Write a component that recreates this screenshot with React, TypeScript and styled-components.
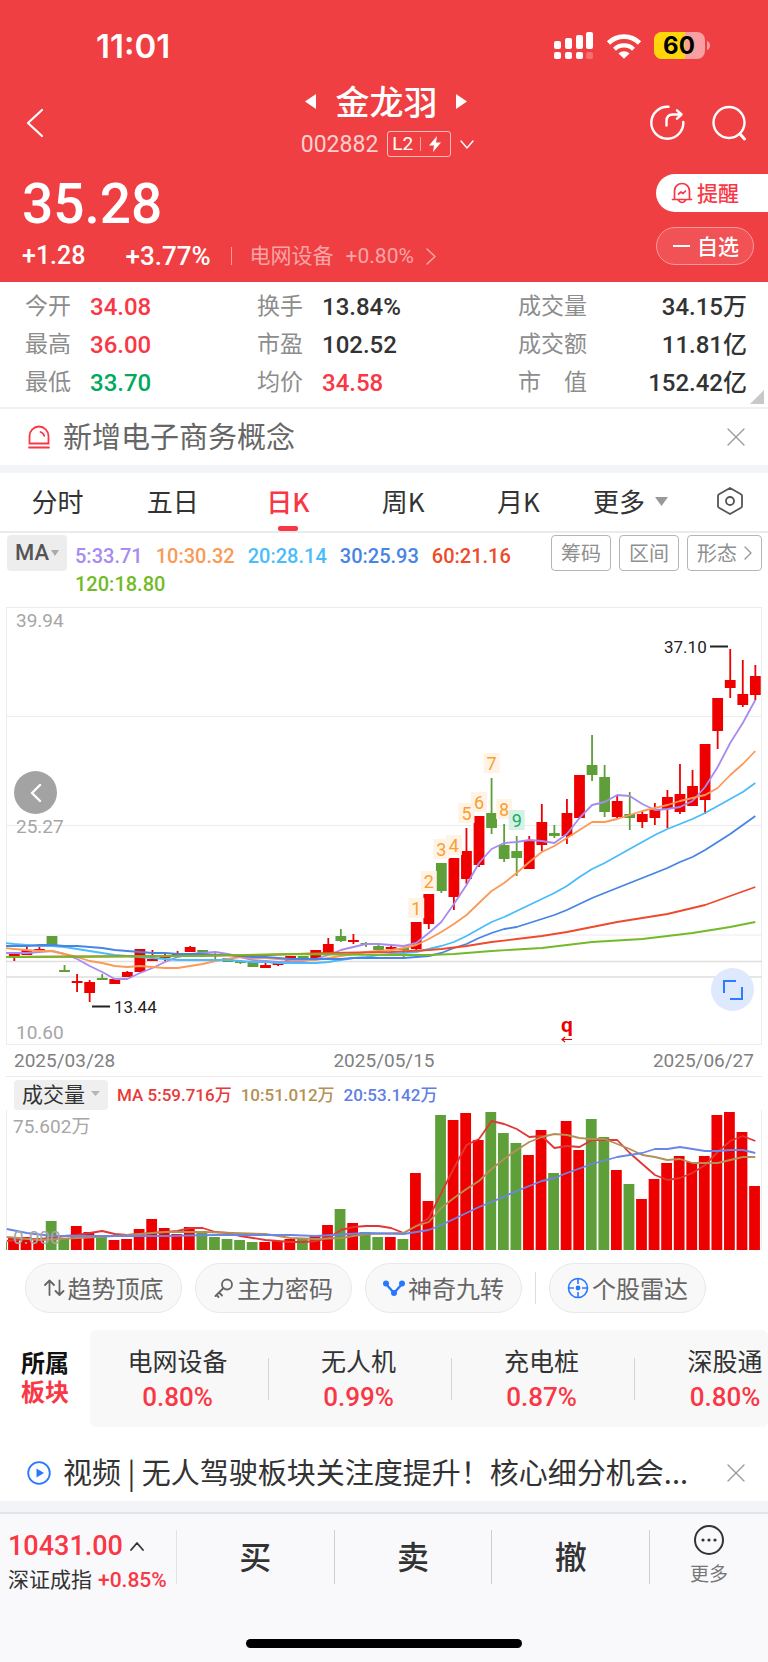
import React from 'react';
import styled, { createGlobalStyle } from 'styled-components';

const RED = '#f93745';
const UP = '#ef0000';
const DOWN = '#5f9f3a';
const CJK = '"Noto Sans CJK SC", sans-serif';
const NUM = `Roboto, ${CJK}`;

const Global = createGlobalStyle`
  * { box-sizing: border-box; }
  body { margin: 0; background: #fff; font-family: ${NUM}; color: #333; }
  button { font: inherit; color: inherit; background: none; border: 0; padding: 0; margin: 0; cursor: pointer; display: flex; align-items: center; }
  a { color: inherit; text-decoration: none; }
  svg { display: block; flex: none; }
  h1, p, dl, dd, dt { margin: 0; font-weight: 400; }
`;

/* ---------- header ---------- */
const Header = styled.header`
  background: #f03f42;
  color: #fff;
  padding: 30px 0 14px;
`;
const StatusBar = styled.div`
  display: flex;
  justify-content: space-between;
  align-items: center;
  height: 32px;
  padding: 0 57px 0 96px;
`;
const Clock = styled.span`
  font: 600 33px/32px Inter, sans-serif;
`;
const StatusIcons = styled.div`
  display: flex;
  align-items: center;
  gap: 12px;
`;
const Nav = styled.div`
  display: grid;
  grid-template-columns: 1fr auto 1fr;
  align-items: center;
  padding: 18px 21px 0 26px;
`;
const NavActions = styled.div`
  display: flex;
  justify-content: flex-end;
  gap: 27px;
`;
const TitleBlock = styled.div`
  display: flex;
  flex-direction: column;
  align-items: center;
`;
const TitleRow = styled.div`
  display: flex;
  align-items: center;
  gap: 18px;
`;
const Title = styled.h1`
  font: 500 34px/42px ${CJK};
`;
const CodeRow = styled.div`
  display: flex;
  align-items: center;
  gap: 9px;
  height: 44px;
  padding-left: 2px;
  font-size: 23px;
  color: #fccfd0;
`;
const LevelBadge = styled.span`
  display: flex;
  align-items: center;
  gap: 7px;
  height: 26px;
  padding: 0 8px 0 4px;
  border: 1px solid #fbbcbd;
  border-radius: 3px;
  color: #fff;
  font: 400 19px/24px ${NUM};
`;
const Rule = styled.span<{ $h: number; $color: string }>`
  width: 1px;
  height: ${p => p.$h}px;
  background: ${p => p.$color};
  flex: none;
`;
const Quote = styled.div`
  display: flex;
  justify-content: space-between;
  padding: 8px 0 0 22px;
`;
const QuoteMain = styled.div`
  display: flex;
  flex-direction: column;
`;
const Price = styled.div`
  font: 500 55px/60px ${NUM};
  margin-bottom: 10px;
`;
const ChangeRow = styled.div`
  display: flex;
  align-items: center;
  height: 24px;
  font: 500 25px/24px ${NUM};
`;
const Percent = styled.span`
  margin: 0 20px 0 40px;
  font-size: 26px;
`;
const SectorLink = styled.a`
  display: flex;
  align-items: center;
  gap: 12px;
  margin-left: 18px;
  color: #f9a5a7;
  font: 400 21px/24px ${NUM};
`;
const QuoteActions = styled.div`
  display: flex;
  flex-direction: column;
  width: 112px;
  gap: 15px;
`;
const RemindButton = styled.button`
  height: 38px;
  padding-left: 15px;
  gap: 4px;
  border-radius: 19px 0 0 19px;
  background: #fff;
  color: ${RED};
  font: 500 21px/38px ${CJK};
`;
const WatchButton = styled.button`
  width: 98px;
  height: 38px;
  gap: 7px;
  padding-left: 16px;
  border: 1px solid #f79a9c;
  border-radius: 19px;
  background: #f15255;
  font: 500 21px/36px ${CJK};
`;
const ButtonText = styled.span`
  line-height: 32px;
  margin-bottom: 2px;
`;

/* ---------- statistics ---------- */
const Stats = styled.section`
  position: relative;
  display: flex;
  padding: 6px 21px 5px 25px;
  border-bottom: 2px solid #f1f1f3;
`;
const StatColumn = styled.dl<{ $width: string; $push?: boolean }>`
  flex: ${p => p.$width};
  div { display: flex; align-items: center; height: 38px; justify-content: ${p => (p.$push ? 'space-between' : 'flex-start')}; }
`;
const StatName = styled.dt<{ $width: number }>`
  width: ${p => p.$width}px;
  margin-bottom: 6px;
  font: 400 23px/32px ${CJK};
  color: #8d8d8d;
  white-space: pre;
`;
const StatValue = styled.dd<{ $color: string }>`
  font: 500 24px/38px ${NUM};
  color: ${p => p.$color};
`;
const Corner = styled.svg`
  position: absolute;
  right: 4px;
  bottom: 3px;
`;

/* ---------- notices ---------- */
const Notice = styled.section<{ $color: string }>`
  display: flex;
  align-items: center;
  height: 56px;
  padding: 0 23px 0 27px;
  gap: 12px;
  color: ${p => p.$color};
`;
const NoticeText = styled.a`
  flex: 1;
  margin-bottom: 4px;
  white-space: nowrap;
  overflow: hidden;
  font: 400 29px/44px ${CJK};
`;
const VideoNotice = styled(Notice)`
  height: 74px;
  padding-top: 17px;
`;
const Band = styled.div<{ $h: number }>`
  height: ${p => p.$h}px;
  background: #f2f4f8;
`;

/* ---------- tabs ---------- */
const Tabs = styled.nav`
  display: grid;
  grid-template-columns: repeat(6, 15%) 1fr;
  height: 60px;
  border-bottom: 2px solid #ebebeb;
`;
const Tab = styled.button<{ $active?: boolean }>`
  position: relative;
  justify-content: center;
  gap: 10px;
  padding-bottom: 2px;
  font: ${p => (p.$active ? 500 : 400)} 26px/56px ${CJK};
  color: ${p => (p.$active ? RED : '#333')};
  &::after {
    content: '';
    display: ${p => (p.$active ? 'block' : 'none')};
    position: absolute;
    left: calc(50% - 10px);
    bottom: 0;
    width: 20px;
    height: 5px;
    border-radius: 2px;
    background: ${RED};
  }
`;
const MoreTab = styled(Tab)`
  padding-right: 6px;
`;

/* ---------- chart ---------- */
const Legend = styled.div`
  display: flex;
  align-items: flex-start;
  padding: 2px 6px 0 7px;
  height: 74px;
`;
const IndicatorButton = styled.button`
  height: 36px;
  width: 60px;
  justify-content: center;
  gap: 2px;
  background: #ededed;
  border-radius: 4px;
  color: #555;
  font: 500 22px/36px ${NUM};
`;
const LegendValues = styled.div`
  flex: 1;
  display: flex;
  flex-wrap: wrap;
  column-gap: 13px;
  padding: 7px 0 0 8px;
  font: 500 20px/28px ${NUM};
`;
const Tone = styled.span<{ $color: string }>`
  color: ${p => p.$color};
`;
const LegendActions = styled.div`
  display: flex;
  gap: 8px;
`;
const OutlineButton = styled.button`
  height: 36px;
  padding: 0 9px;
  gap: 7px;
  border: 1px solid #b5b5b5;
  border-radius: 4px;
  color: #8f8f8f;
  font: 400 20px/34px ${CJK};
`;
const ChartFrame = styled.div`
  position: relative;
  margin: 0 6px;
  svg.plot { width: 100%; height: auto; }
`;
const RoundButton = styled.button<{ $bg: string; $side: 'left' | 'right'; $top: string }>`
  position: absolute;
  ${p => p.$side}: 8px;
  top: ${p => p.$top};
  width: 43px;
  height: 43px;
  border-radius: 50%;
  justify-content: center;
  background: ${p => p.$bg};
`;
const Dates = styled.div`
  display: flex;
  justify-content: space-between;
  margin: 0 6px;
  padding: 0 8px;
  border-bottom: 1px solid #ebebeb;
  font: 400 19px/31px ${NUM};
  color: #808080;
`;
const VolumeLegend = styled.div`
  display: flex;
  align-items: center;
  gap: 9px;
  padding: 2px 14px 0;
  height: 33px;
  font: 500 17px/30px ${NUM};
`;
const VolumeButton = styled.button`
  height: 30px;
  width: 94px;
  justify-content: center;
  gap: 6px;
  padding-bottom: 3px;
  border-radius: 4px;
  background: #efefef;
  color: #333;
  font: 400 21px/27px ${CJK};
`;

/* ---------- chips ---------- */
const Chips = styled.div`
  display: flex;
  align-items: center;
  gap: 13px;
  padding: 13px 25px 17px;
`;
const Chip = styled.button`
  height: 50px;
  width: 157px;
  justify-content: center;
  gap: 3px;
  border: 1px solid #e9e9e9;
  border-radius: 25px;
  background: #f8f8f8;
  color: #666;
  font: 400 24px/48px ${CJK};
  white-space: nowrap;
`;

/* ---------- sectors ---------- */
const Sectors = styled.section`
  display: flex;
  align-items: stretch;
  height: 97px;
`;
const SectorsTitle = styled.div`
  width: 90px;
  padding: 17px 0 0 21px;
  color: #111;
  font: 700 24px/29px ${CJK};
  em { display: block; font-style: normal; color: ${RED}; }
`;
const SectorList = styled.div`
  flex: 1;
  display: flex;
  overflow: hidden;
  background: #f8f8f8;
  border-radius: 6px;
  padding-top: 14px;
`;
const Sector = styled.a`
  flex: none;
  display: flex;
  justify-content: space-between;
  align-items: center;
  width: 183px;
  height: 70px;
  &:first-child { width: 179px; }
`;
const SectorBody = styled.span`
  flex: 1;
  display: flex;
  flex-direction: column;
  align-items: center;
  padding-right: 3px;
  font: 400 25px/36px ${CJK};
  color: #333;
`;
const SectorRate = styled.span`
  color: ${RED};
  font: 500 26px/38px ${NUM};
`;

/* ---------- bottom bar ---------- */
const BottomBar = styled.footer`
  background: #f9f9fc;
  border-top: 2px solid #e3e4e9;
  padding: 10px 0 15px;
`;
const Trade = styled.div`
  display: grid;
  grid-template-columns: 176px 1px 1fr 1px 1fr 1px 1fr 1px 118px;
  align-items: start;
`;
const TradeRule = styled(Rule)`
  margin-top: 6px;
`;
const IndexBlock = styled.div`
  padding: 6px 0 0 8px;
  font: 400 21px/32px ${CJK};
  white-space: nowrap;
`;
const IndexValue = styled.div`
  display: flex;
  align-items: center;
  gap: 7px;
  color: ${RED};
  font: 500 27px/32px ${NUM};
`;
const IndexRate = styled.span`
  color: ${RED};
  margin-left: 6px;
  font: 500 21px/32px ${NUM};
`;
const TradeButton = styled.button`
  justify-content: center;
  padding-top: 4px;
  font: 500 32px/54px ${CJK};
`;
const MoreButton = styled.button`
  flex-direction: column;
  gap: 3px;
  color: #777;
  font: 400 19px/28px ${CJK};
`;
const HomeIndicator = styled.div`
  width: 36%;
  height: 9px;
  margin: 43px auto 0;
  border-radius: 5px;
  background: #000;
`;

/* ---------- data ---------- */
/* one candle per day: direction, then high, body top, body bottom and low on the plot's own scale */
type Candle = [string, number, number, number, number];
const candles: Candle[] = [
  ['u', 347, 347, 349, 354], ['u', 339, 343, 348, 348], ['u', 340, 342, 344, 344], ['d', 329, 329, 338, 338],
  ['d', 358, 363, 365, 365], ['u', 367, 374, 376, 385], ['u', 373, 375, 386, 395], ['d', 367, 371, 373, 373],
  ['u', 371, 372, 377, 377], ['u', 364, 365, 370, 370], ['u', 342, 342, 365, 365], ['u', 343, 352, 354, 354],
  ['u', 345, 349, 351, 354], ['u', 344, 347, 349, 350], ['u', 339, 340, 345, 345], ['d', 343, 343, 346, 350],
  ['d', 346, 347, 349, 352], ['d', 351, 351, 355, 355], ['d', 353, 354, 356, 357], ['d', 355, 355, 360, 360],
  ['u', 356, 358, 361, 361], ['u', 356, 356, 358, 359], ['u', 349, 349, 355, 355], ['d', 349, 349, 351, 351],
  ['u', 343, 343, 351, 351], ['u', 331, 337, 346, 346], ['d', 322, 329, 334, 335], ['u', 327, 333, 335, 337],
  ['d', 335, 336, 338, 340], ['d', 337, 339, 343, 343], ['u', 338, 340, 342, 342], ['d', 341, 341, 343, 350],
  ['u', 315, 315, 342, 344], ['u', 287, 287, 317, 322], ['d', 256, 256, 284, 286], ['u', 251, 251, 290, 303],
  ['u', 221, 244, 272, 277], ['u', 209, 209, 258, 260], ['d', 171, 206, 221, 227], ['d', 217, 238, 252, 255],
  ['d', 229, 244, 251, 269], ['u', 229, 233, 262, 262], ['u', 197, 215, 238, 244], ['d', 218, 226, 229, 231],
  ['u', 192, 206, 229, 237], ['u', 168, 168, 211, 211], ['d', 128, 158, 168, 174], ['d', 158, 170, 205, 210],
  ['u', 189, 194, 210, 211], ['d', 185, 207, 211, 223], ['u', 205, 207, 215, 221], ['u', 196, 202, 211, 218],
  ['u', 183, 190, 202, 221], ['u', 157, 187, 205, 207], ['u', 163, 179, 199, 199], ['u', 137, 137, 193, 207],
  ['u', 91, 91, 124, 142], ['u', 42, 73, 81, 91], ['u', 53, 87, 98, 100], ['u', 58, 69, 88, 93],
];
const volumes = [
  12, 13, 11, 29, 12, 24, 18, 14, 10, 11, 21, 31, 22, 16, 23, 19, 13, 11, 10, 8, 8, 9, 11, 11, 14, 25, 41, 27, 18, 13,
  13, 11, 77, 49, 135, 130, 137, 110, 138, 117, 107, 95, 120, 77, 129, 100, 131, 113, 80, 66, 51, 71, 87, 94, 88, 94,
  135, 138, 118, 64,
];
/* averages: [day, level] pairs */
type Series = { color: string; points: [number, number][] };
const daily = (from: number, ys: number[]): [number, number][] => ys.map((y, i) => [i + from, y]);
const averages: Series[] = [
  { color: '#a78bf0', points: daily(-0.7, [346]).concat(daily(0, [346, 346, 345, 344, 347, 352, 359, 365, 372, 372, 366, 361, 355, 350, 347, 346, 345, 347, 350, 353, 354, 355, 355, 354, 352, 348, 343, 340, 337, 337, 338, 339, 336, 326, 315, 297, 278, 256, 242, 236, 235, 233, 234, 236, 227, 211, 198, 195, 188, 189, 197, 203, 202, 200, 194, 180, 160, 136, 116, 93])) },
  { color: '#fb9a56', points: daily(-0.7, [341]).concat(daily(0, [342, 343, 344, 344, 347, 350, 354, 356, 359, 360, 359, 360, 361, 361, 359, 357, 354, 352, 350, 351, 351, 352, 353, 353, 353, 351, 349, 347, 345, 344, 343, 341, 338, 332, 325, 317, 308, 296, 284, 276, 266, 255, 245, 239, 231, 223, 215, 215, 212, 208, 204, 201, 198, 194, 191, 188, 181, 168, 157, 144])) },
  { color: '#4abcfb', points: daily(-0.7, [336]).concat(daily(0, [337, 338, 339, 339, 340, 342, 344, 346, 348, 349, 350, 351, 352, 353, 353, 353, 353, 353, 354, 355, 355, 356, 356, 356, 356, 355, 353, 351, 350, 348, 347, 346, 345, 342, 339, 335, 329, 322, 315, 310, 304, 298, 292, 286, 279, 270, 262, 256, 249, 242, 235, 228, 222, 217, 212, 206, 199, 192, 185, 176])) },
  { color: '#4784e4', points: daily(-0.7, [339]).concat(daily(0, [339, 339, 338, 338, 339, 339, 340, 341, 343, 344, 345, 346, 346, 347, 347, 347, 348, 348, 349, 350, 350, 351, 352, 352, 352, 352, 352, 351, 351, 351, 351, 351, 350, 349, 346, 341, 337, 331, 326, 322, 320, 316, 312, 308, 303, 297, 291, 286, 281, 276, 271, 266, 261, 255, 250, 243, 235, 227, 218, 209])) },
  { color: '#ee4a2b', points: [[-0.7, 350], [13, 349], [20, 348], [25, 346], [30, 345], [33, 343], [34, 342], [36, 339], [38, 335], [40, 332], [42, 329], [44, 325], [46, 320], [48, 315], [50, 311], [52, 307], [54, 301], [55, 298], [57, 289], [59, 280]] },
  { color: '#72bb26', points: [[-0.7, 350], [14, 349], [22, 347], [30, 348], [33, 348], [35, 347], [38, 344], [42, 341], [46, 335], [50, 332], [54, 326], [57, 320], [59, 315]] },
];
const volumeAverages: Series[] = [
  { color: '#e23535', points: daily(-0.6, [9]).concat(daily(0, [10, 11, 11, 12, 14, 15, 17, 19, 16, 15, 16, 17, 18, 19, 22, 22, 18, 17, 14, 12, 10, 9, 8, 8, 9, 12, 20, 23, 24, 24, 22, 17, 24, 32, 57, 82, 105, 111, 129, 126, 121, 113, 114, 102, 104, 103, 110, 110, 110, 97, 86, 75, 70, 72, 77, 85, 98, 109, 114, 109])) },
  { color: '#b59055', points: [[-0.6, 13], [2, 10], [5, 12], [8, 14], [10, 16], [12, 18], [15, 18], [20, 16], [22, 12], [24, 11], [26, 12], [28, 16], [31, 17], [32, 24], [33, 28], [34, 42], [35, 52], [36, 61], [37, 69], [38, 81], [39, 91], [40, 100], [41, 108], [42, 113], [43, 116], [44, 115], [45, 112], [46, 111], [47, 111], [48, 106], [49, 101], [50, 95], [51, 93], [52, 90], [53, 91], [54, 87], [55, 87], [56, 87], [57, 90], [58, 93], [59, 93]] },
  { color: '#6a86e6', points: [[-0.6, 21], [1, 17], [3, 14], [8, 14], [12, 14], [16, 15], [22, 15], [24, 14], [28, 17], [31, 16], [33, 20], [34, 25], [35, 31], [36, 37], [37, 43], [38, 48], [40, 59], [42, 69], [43, 72], [44, 77], [46, 86], [48, 93], [50, 97], [51, 101], [52, 101], [53, 103], [55, 99], [56, 99], [57, 100], [58, 100], [59, 97]] },
];
const signals: [number, number][] = [[32, 302], [33, 275], [34, 243], [35, 239], [36, 207], [37, 196], [38, 157], [39, 203], [40, 214]];

const STEP = 12.56;
const dayX = (day: number) => 8.3 + day * STEP;
const line = (pts: [number, number][], y: (v: number) => number) => pts.map(([d, v]) => `${dayX(d).toFixed(1)},${y(v)}`).join(' ');

const PriceChart = () => (
  <svg className="plot" viewBox="0 0 756 438" role="img" aria-label="日K">
    {[0.5, 109.5, 218.5, 328, 437.5].map(y => <line key={y} x1="0" x2="756" y1={y} y2={y} stroke="#ececec" />)}
    <path d="M.5 0V438M755.5 0V438" stroke="#ececec" />
    <path d="M0 354.5H756M0 370H756" stroke="#dedede" strokeWidth="1.5" />
    {candles.map(([dir, high, top, bottom, low], i) => (
      <g key={i} fill={dir === 'u' ? UP : DOWN}>
        <rect x={dayX(i) - 0.9} y={high} width="1.8" height={low - high} />
        <rect x={dayX(i) - 5.4} y={top} width="10.8" height={bottom - top} />
      </g>
    ))}
    {averages.map(s => <polyline key={s.color} points={line(s.points, v => v)} fill="none" stroke={s.color} strokeWidth="1.8" strokeLinejoin="round" />)}
    <g fontFamily={NUM} fontSize="18" textAnchor="middle">
      {signals.map(([day, y], i) => (
        <g key={day}>
          <rect x={dayX(day) - 8} y={y - 11} width="16" height="20" fill={i === 8 ? '#d5f1e3' : '#fff3e5'} />
          <text x={dayX(day)} y={y + 6} fill={i === 8 ? '#16ad68' : '#f9a02f'}>{i + 1}</text>
        </g>
      ))}
    </g>
    <g fontFamily={NUM} fontSize="19" fill="#a6a6a6">
      <text x="10" y="20">39.94</text>
      <text x="10" y="226">25.27</text>
      <text x="10" y="432">10.60</text>
    </g>
    <g fontFamily={NUM} fontSize="17" fill="#222">
      <text x="658" y="46">37.10</text>
      <text x="108" y="406">13.44</text>
    </g>
    <path d="M704 39.5H722M86 399.5H104" stroke="#222" strokeWidth="2" />
    <text x="561" y="425" textAnchor="middle" fontFamily={NUM} fontSize="21" fontWeight="700" fill={UP}>q</text>
    <path d="M566 432.500H556M559 430l-3 2.500 3 2.500" fill="none" stroke={UP} strokeWidth="1.200" />
  </svg>
);

const VolumeChart = () => (
  <svg className="plot" viewBox="0 0 756 140" role="img" aria-label="成交量">
    <path d="M.5 0V140M755.5 0V140" stroke="#ececec" />
    <rect x="0" y="132" width="1" height="8" fill={DOWN} />
    {volumes.map((v, i) => (
      <rect key={i} x={dayX(i) - 6.2} y={140 - v} width="10.8" height={v} fill={candles[i][0] === 'u' ? UP : DOWN} />
    ))}
    {volumeAverages.map(s => <polyline key={s.color} points={line(s.points, v => 140 - v)} fill="none" stroke={s.color} strokeWidth="1.8" strokeLinejoin="round" />)}
    <g fontFamily={NUM} fontSize="19" fill="#a6a6a6">
      <text x="7" y="23">75.602万</text>
      <text x="7" y="134">0.000</text>
    </g>
  </svg>
);

const Chevron = ({ d, w, h, color, weight = 1.6 }: { d: string; w: number; h: number; color: string; weight?: number }) => (
  <svg width={w} height={h} viewBox={`0 0 ${w} ${h}`} fill="none" stroke={color} strokeWidth={weight} strokeLinecap="round" strokeLinejoin="round"><path d={d} /></svg>
);
const Triangle = ({ points, w, h, color }: { points: string; w: number; h: number; color: string }) => (
  <svg width={w} height={h}><polygon points={points} fill={color} /></svg>
);
const Close = () => <Chevron d="M1 1L17 17M17 1L1 17" w={18} h={18} color="#999" weight={1.3} />;

const statColumns = [
  { width: '0 0 232px', name: 65, rows: [['今开', '34.08', RED], ['最高', '36.00', RED], ['最低', '33.70', '#00a95e']] },
  { width: '1', name: 65, rows: [['换手', '13.84%', '#333'], ['市盈', '102.52', '#333'], ['均价', '34.58', RED]] },
  { width: '0 0 229px', name: 70, push: true, rows: [['成交量', '34.15万', '#333'], ['成交额', '11.81亿', '#333'], ['市　值', '152.42亿', '#333']] },
];
const legend = [
  ['5:33.71', '#a78bf0'], ['10:30.32', '#fb9a56'], ['20:28.14', '#4abcfb'],
  ['30:25.93', '#4784e4'], ['60:21.16', '#ee4a2b'], ['120:18.80', '#72bb26'],
];
const sectors = [['电网设备', '0.80%'], ['无人机', '0.99%'], ['充电桩', '0.87%'], ['深股通', '0.80%']];

export default function App() {
  return (
    <>
      <Global />
      <Header>
        <StatusBar>
          <Clock>11:01</Clock>
          <StatusIcons>
            <svg width="40" height="28" fill="#fff">
              <rect x="0" y="9" width="7" height="8" rx="2" />
              <rect x="11" y="6" width="7" height="11" rx="2" />
              <rect x="22" y="3" width="7" height="14" rx="2" />
              <rect x="32" y="0" width="7" height="17" rx="2" />
              <rect x="0" y="20" width="7" height="7" rx="2" />
              <rect x="11" y="20" width="7" height="7" rx="2" />
              <rect x="22" y="20" width="7" height="7" rx="2" />
              <rect x="32" y="20" width="7" height="7" rx="2" opacity=".25" />
            </svg>
            <svg width="36" height="26" viewBox="0 0 36 26">
              <path d="M2.500 10C11 1.500 25 1.500 33.500 10" fill="none" stroke="#fff" strokeWidth="4.600" />
              <path d="M8.500 16.200c5-5 14-5 19 0" fill="none" stroke="#fff" strokeWidth="4.200" />
              <path d="M12.500 20.500c3-2.900 8-2.900 11 0l-5.500 5.200z" fill="#fff" />
            </svg>
            <svg width="57" height="28" viewBox="0 0 57 28">
              <clipPath id="cell"><rect width="51" height="27" rx="8" /></clipPath>
              <g clipPath="url(#cell)"><rect width="51" height="27" fill="#f79fa1" /><rect width="31" height="27" fill="#ffd60a" /></g>
              <path d="M53 9c4 1 4 8 0 9z" fill="#f79fa1" />
              <text x="25" y="22" textAnchor="middle" fontFamily="Inter, sans-serif" fontSize="24" fontWeight="700" fill="#000">60</text>
            </svg>
          </StatusIcons>
        </StatusBar>
        <Nav>
          <button aria-label="返回"><Chevron d="M16 2L2 15L16 28" w={18} h={30} color="#fff" weight={2.2} /></button>
          <TitleBlock>
            <TitleRow>
              <button aria-label="上一只"><Triangle points="11,0 11,15 0,7.5" w={12} h={15} color="#fff" /></button>
              <Title>金龙羽</Title>
              <button aria-label="下一只"><Triangle points="1,0 1,15 12,7.5" w={12} h={15} color="#fff" /></button>
            </TitleRow>
            <CodeRow>
              <span>002882</span>
              <LevelBadge>
                L2<Rule $h={14} $color="#f9a5a7" />
                <svg width="14" height="16" viewBox="0 0 14 16"><path d="M9 0L1 9.500H6L5 16L13 6.500H8z" fill="#fff" /></svg>
              </LevelBadge>
              <Chevron d="M1 1L7 8L13 1" w={14} h={9} color="#fff" weight={1.4} />
            </CodeRow>
          </TitleBlock>
          <NavActions>
            <button aria-label="分享">
              <svg width="35" height="36" viewBox="0 0 35 36" fill="none" stroke="#fff" strokeWidth="2.400" strokeLinecap="round" strokeLinejoin="round">
                <path d="M18.500 1.800A16 16 0 1 0 33.300 17" />
                <path d="M16.500 20.500V16c0-4 2.500-6.500 6.500-6.500h8M27 5.300l4.500 4.200-4.500 4.200" />
              </svg>
            </button>
            <button aria-label="搜索">
              <svg width="35" height="36" viewBox="0 0 35 36" fill="none" stroke="#fff" strokeWidth="2.400" strokeLinecap="round"><circle cx="17" cy="17.500" r="15.500" /><path d="M28 29l4.500 5" strokeWidth="3" /></svg>
            </button>
          </NavActions>
        </Nav>
        <Quote>
          <QuoteMain>
            <Price>35.28</Price>
            <ChangeRow>
              <span>+1.28</span>
              <Percent>+3.77%</Percent>
              <Rule $h={18} $color="#f79a9c" />
              <SectorLink href="#sector"><span>电网设备</span><span>+0.80%</span><Chevron d="M1 1L9 8.5L1 16" w={10} h={17} color="#f9a5a7" weight={1.5} /></SectorLink>
            </ChangeRow>
          </QuoteMain>
          <QuoteActions>
            <RemindButton>
              <svg width="22" height="22" viewBox="0 0 22 22" fill="none" stroke={RED} strokeWidth="1.700" strokeLinecap="round" strokeLinejoin="round">
                <path d="M1.500 17.500H20.500M3.500 17.500V9a7.500 7.500 0 0 1 15 0V17.500M7.500 18.500q3.500 4 7 0" />
                <path d="M7.500 12l2.500-2 2 1.500 2.500-2.500" />
              </svg>
              <ButtonText>提醒</ButtonText>
            </RemindButton>
            <WatchButton>
              <svg width="17" height="3"><rect width="17" height="2" y="0" fill="#fff" /></svg>
              <ButtonText>自选</ButtonText>
            </WatchButton>
          </QuoteActions>
        </Quote>
      </Header>

      <Stats>
        {statColumns.map(col => (
          <StatColumn key={col.width} $width={col.width} $push={col.push}>
            {col.rows.map(([name, value, color]) => (
              <div key={name}><StatName $width={col.name}>{name}</StatName><StatValue $color={color}>{value}</StatValue></div>
            ))}
          </StatColumn>
        ))}
        <Corner width="14" height="14"><polygon points="14,0 14,14 0,14" fill="#c8c8c8" /></Corner>
      </Stats>

      <Notice $color="#666">
        <svg width="24" height="24" viewBox="0 0 24 24" fill="none" stroke={RED} strokeWidth="1.800" strokeLinecap="round"><path d="M2.500 18.500V11a9.500 9.500 0 0 1 19 0v7.500zM2 22.500H22M13.500 7c2 .6 3.300 2 3.700 3.800" /></svg>
        <NoticeText href="#notice">新增电子商务概念</NoticeText>
        <button aria-label="关闭"><Close /></button>
      </Notice>
      <Band $h={8} />

      <Tabs>
        <Tab>分时</Tab>
        <Tab>五日</Tab>
        <Tab $active>日K</Tab>
        <Tab>周K</Tab>
        <Tab>月K</Tab>
        <MoreTab>更多<Triangle points="0,0 13,0 6.5,9" w={13} h={9} color="#999" /></MoreTab>
        <Tab aria-label="设置">
          <svg width="28" height="30" viewBox="0 0 28 30" fill="none" stroke="#555" strokeWidth="1.800" strokeLinejoin="round"><path d="M14 2L25 8.200Q26 8.800 26 10V20Q26 21.200 25 21.800L14 28L3 21.800Q2 21.200 2 20V10Q2 8.800 3 8.200Z" /><circle cx="14" cy="15" r="4" /></svg>
        </Tab>
      </Tabs>

      <Legend>
        <IndicatorButton>MA<Triangle points="0,0 8,0 4,6" w={8} h={6} color="#aaa" /></IndicatorButton>
        <LegendValues>{legend.map(([text, color]) => <Tone key={text} $color={color}>{text}</Tone>)}</LegendValues>
        <LegendActions>
          <OutlineButton>筹码</OutlineButton>
          <OutlineButton>区间</OutlineButton>
          <OutlineButton>形态<Chevron d="M1 1L7 7L1 13" w={8} h={14} color="#999" weight={1.4} /></OutlineButton>
        </LegendActions>
      </Legend>

      <ChartFrame>
        <PriceChart />
        <RoundButton $bg="#a3a3a3" $side="left" $top="37.500%" aria-label="向前"><Chevron d="M10 1L2 9L10 17" w={12} h={18} color="#fff" weight={2.4} /></RoundButton>
        <RoundButton $bg="#dee9fe" $side="right" $top="82.500%" aria-label="全屏">
          <svg width="20" height="20" fill="none" stroke="#2f7bff" strokeWidth="2"><path d="M1 13V1H13M19 7V19H7" /></svg>
        </RoundButton>
      </ChartFrame>
      <Dates><span>2025/03/28</span><span>2025/05/15</span><span>2025/06/27</span></Dates>
      <VolumeLegend>
        <VolumeButton>成交量<Triangle points="0,0 9,0 4.5,5" w={9} h={5} color="#b5b5b5" /></VolumeButton>
        <Tone $color="#e83a3a">MA 5:59.716万</Tone>
        <Tone $color="#b59055">10:51.012万</Tone>
        <Tone $color="#5f7fe6">20:53.142万</Tone>
      </VolumeLegend>
      <ChartFrame><VolumeChart /></ChartFrame>

      <Chips>
        <Chip>
          <svg width="21" height="20" viewBox="0 0 21 20" fill="none" stroke="#666" strokeWidth="1.800" strokeLinecap="round" strokeLinejoin="round"><path d="M1 7L5.500 2.500L10 7M5.500 2.500V17M15.500 2.500V17L11.500 13M15.500 17L19.500 13" /></svg>
          趋势顶底
        </Chip>
        <Chip>
          <svg width="20" height="20" viewBox="0 0 20 20" fill="none" stroke="#666" strokeWidth="1.800" strokeLinecap="round" strokeLinejoin="round"><circle cx="13" cy="6.500" r="5" /><path d="M9.500 10L1.500 18M5 14.500l3 3M2.500 17l2 2" /></svg>
          主力密码
        </Chip>
        <Chip>
          <svg width="22" height="16" viewBox="0 0 22 16" fill="#2878ff"><path d="M3 4l8 9 8-9" fill="none" stroke="#2878ff" strokeWidth="2.400" /><circle cx="3" cy="3.500" r="3" /><circle cx="19" cy="3.500" r="3" /><circle cx="11" cy="13" r="3" /></svg>
          神奇九转
        </Chip>
        <Rule $h={32} $color="#dedede" />
        <Chip>
          <svg width="22" height="22" viewBox="0 0 22 22" fill="none" stroke="#2878ff" strokeWidth="1.600"><circle cx="11" cy="11" r="9.500" /><path d="M11 1V7M11 15V21M1 11H7M15 11H21" /><circle cx="11" cy="11" r="1.600" fill="#2878ff" /></svg>
          个股雷达
        </Chip>
      </Chips>

      <Sectors>
        <SectorsTitle>所属<em>板块</em></SectorsTitle>
        <SectorList>
          {sectors.map(([name, rate], i) => (
            <Sector key={name} href="#sector">
              <SectorBody>{name}<SectorRate>{rate}</SectorRate></SectorBody>
              {i < 3 && <Rule $h={42} $color="#d5d5d5" />}
            </Sector>
          ))}
        </SectorList>
      </Sectors>

      <VideoNotice $color="#333">
        <svg width="24" height="24" viewBox="0 0 24 24"><circle cx="12" cy="12" r="10.800" fill="none" stroke="#2878ff" strokeWidth="1.800" /><path d="M9.500 7.500L17 12L9.500 16.500z" fill="#2878ff" /></svg>
        <NoticeText href="#video">视频 | 无人驾驶板块关注度提升！核心细分机会...</NoticeText>
        <button aria-label="关闭"><Close /></button>
      </VideoNotice>
      <Band $h={11} />

      <BottomBar>
        <Trade>
          <IndexBlock>
            <IndexValue>10431.00<Chevron d="M1 8L7 1L13 8" w={14} h={9} color="#333" weight={1.8} /></IndexValue>
            深证成指<IndexRate>+0.85%</IndexRate>
          </IndexBlock>
          <TradeRule $h={54} $color="#e3e3e6" />
          <TradeButton>买</TradeButton>
          <TradeRule $h={54} $color="#cfcfd3" />
          <TradeButton>卖</TradeButton>
          <TradeRule $h={54} $color="#cfcfd3" />
          <TradeButton>撤</TradeButton>
          <TradeRule $h={54} $color="#cfcfd3" />
          <MoreButton>
            <svg width="32" height="32" viewBox="0 0 32 32" fill="#333"><circle cx="16" cy="16" r="14" fill="none" stroke="#333" strokeWidth="2" /><circle cx="10" cy="16" r="1.600" /><circle cx="16" cy="16" r="1.600" /><circle cx="22" cy="16" r="1.600" /></svg>
            更多
          </MoreButton>
        </Trade>
        <HomeIndicator />
      </BottomBar>
    </>
  );
}
